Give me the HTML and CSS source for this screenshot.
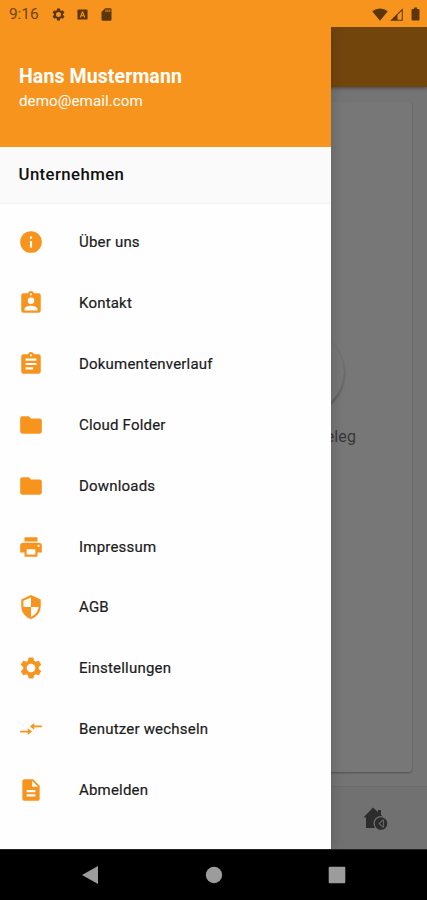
FILE: index.html
```html
<!DOCTYPE html>
<html lang="de">
<head>
<meta charset="utf-8">
<meta name="viewport" content="width=device-width, initial-scale=1">
<title>Unternehmen</title>
<link rel="stylesheet" href="styles.css">
</head>
<body>
<div class="phone">
  <header class="status">
    <span class="time">9:16</span>
    <svg class="s-gear" viewBox="0 0 24 24"><path d="M19.14 12.94c.04-.3.06-.61.06-.94s-.02-.64-.07-.94l2.03-1.58a.49.49 0 0 0 .12-.61l-1.92-3.32a.49.49 0 0 0-.59-.22l-2.39.96a7 7 0 0 0-1.62-.94l-.36-2.54a.48.48 0 0 0-.48-.41h-3.84a.48.48 0 0 0-.47.41l-.36 2.54a7.400 7.400 0 0 0-1.620.94l-2.390-.96a.48.48 0 0 0-.59.22L2.740 8.870a.48.48 0 0 0 .12.61l2.030 1.580a6 6 0 0 0 0 1.880l-2.030 1.580a.49.49 0 0 0-.12.61l1.920 3.320c.12.22.37.29.59.22l2.390-.96c.5.38 1.030.7 1.620.94l.36 2.540c.05.24.24.41.48.41h3.840c.24 0 .44-.17.47-.41l.36-2.540a7 7 0 0 0 1.620-.94l2.390.96c.22.08.47 0 .59-.22l1.920-3.320a.48.48 0 0 0-.12-.61zM12 16a4 4 0 1 1 0-8 4 4 0 0 1 0 8z"/></svg>
    <svg class="s-a" viewBox="0 0 12 12"><path fill-rule="evenodd" d="M1.500.5h9q1 0 1 1v9q0 1-1 1h-9q-1 0-1-1v-9q0-1 1-1zM5.300 2.600 3 9.300h1.300l.5-1.400h2.400l.5 1.400H9L6.700 2.600zM6 4.400l.8 2.400H5.200z"/></svg>
    <svg class="s-sd" viewBox="0 0 24 24"><path d="M18 2h-8L4 8v12a2 2 0 0 0 2 2h12a2 2 0 0 0 2-2V4a2 2 0 0 0-2-2zm-6 6h-1.500V4H12zm3 0h-1.500V4H15zm3 0h-1.500V4H18z"/></svg>
    <span class="grow"></span>
    <svg class="s-wifi" viewBox="0 0 16 13"><path d="M8 12.800.2 3.200Q3.600.4 8 .4t7.800 2.800z"/></svg>
    <svg class="s-cell" viewBox="0 0 13 13"><path fill-rule="evenodd" d="M.2 12.800 12.800.2v12.600zM7.500 11.800h4.300V2.700L7.500 7z"/></svg>
    <svg class="s-bat" viewBox="0 0 9 14"><path d="M3 .5h3V2h1.500q1 0 1 1v9.500q0 1-1 1h-6q-1 0-1-1V3q0-1 1-1H3z"/></svg>
  </header>

  <div class="stage">
    <main class="page">
      <div class="appbar"></div>
      <div class="content">
        <section class="card">
          <div class="action"><span class="disc"></span><span class="label">Beleg</span></div>
        </section>
      </div>
      <footer class="tabs">
        <svg viewBox="0 0 26 26"><path d="M.5 12.500 10 2.500l5 4.500V5h3v4.700l3.500 3.300H20v10H3V12.500z"/><circle class="ring" cx="18" cy="18.500" r="7.500"/><circle cx="18" cy="18.500" r="6.300"/><path class="euro" d="M19.800 14.800l-3.600 3.700 3.600 3.700M20.500 14.500v8"/></svg>
      </footer>
    </main>

    <aside class="drawer">
      <div class="account">
        <div class="name">Hans Mustermann</div>
        <div class="mail">demo@email.com</div>
      </div>
      <h2 class="section">Unternehmen</h2>
      <nav class="menu">
        <a><svg viewBox="0 0 24 24"><path d="M12 2a10 10 0 1 0 0 20 10 10 0 0 0 0-20zm1 15h-2v-6h2zm0-8h-2V7h2z"/></svg><span>Über uns</span></a>
        <a><svg viewBox="0 0 24 24"><path d="M19 3h-4.180a3 3 0 0 0-5.640 0H5a2 2 0 0 0-2 2v14a2 2 0 0 0 2 2h14a2 2 0 0 0 2-2V5a2 2 0 0 0-2-2zm-7 0a1 1 0 1 1 0 2 1 1 0 0 1 0-2zm0 4a3 3 0 1 1 0 6 3 3 0 0 1 0-6zm6 12H6v-1.400c0-2 4-3.100 6-3.100s6 1.100 6 3.100z"/></svg><span>Kontakt</span></a>
        <a><svg viewBox="0 0 24 24"><path d="M19 3h-4.180a3 3 0 0 0-5.640 0H5a2 2 0 0 0-2 2v14a2 2 0 0 0 2 2h14a2 2 0 0 0 2-2V5a2 2 0 0 0-2-2zm-7 0a1 1 0 1 1 0 2 1 1 0 0 1 0-2zm2 14H7v-2h7zm3-4H7v-2h10zm0-4H7V7h10z"/></svg><span>Dokumentenverlauf</span></a>
        <a><svg viewBox="0 0 24 24"><path d="M10 4H4a2 2 0 0 0-1.990 2L2 18a2 2 0 0 0 2 2h16a2 2 0 0 0 2-2V8a2 2 0 0 0-2-2h-8z"/></svg><span>Cloud Folder</span></a>
        <a><svg viewBox="0 0 24 24"><path d="M10 4H4a2 2 0 0 0-1.990 2L2 18a2 2 0 0 0 2 2h16a2 2 0 0 0 2-2V8a2 2 0 0 0-2-2h-8z"/></svg><span>Downloads</span></a>
        <a><svg viewBox="0 0 24 24"><path d="M19 8H5a3 3 0 0 0-3 3v6h4v4h12v-4h4v-6a3 3 0 0 0-3-3zm-3 11H8v-5h8zm3-7a1 1 0 1 1 0-2 1 1 0 0 1 0 2zM18 3H6v4h12z"/></svg><span>Impressum</span></a>
        <a><svg viewBox="0 0 24 24"><path d="M12 1 3 5v6c0 5.550 3.840 10.740 9 12 5.160-1.260 9-6.450 9-12V5zm0 10.990h7c-.53 4.120-3.280 7.790-7 8.940V12H5V6.300l7-3.110z"/></svg><span>AGB</span></a>
        <a><svg viewBox="-.5 -.5 25 25"><path d="M19.430 12.980c.04-.32.07-.64.07-.98s-.03-.66-.07-.98l2.110-1.650c.19-.15.24-.42.12-.64l-2-3.460a.5.5 0 0 0-.61-.22l-2.490 1c-.52-.4-1.080-.73-1.690-.98l-.38-2.650A.49.49 0 0 0 14 2h-4a.49.49 0 0 0-.49.42l-.38 2.650c-.61.25-1.170.59-1.690.98l-2.490-1a.49.49 0 0 0-.61.22l-2 3.460a.5.5 0 0 0 .12.64l2.110 1.650a8 8 0 0 0 0 1.960l-2.110 1.650a.5.5 0 0 0-.12.64l2 3.460c.12.22.39.3.61.22l2.490-1c.52.4 1.080.73 1.690.98l.38 2.650c.03.24.24.42.49.42h4c.25 0 .46-.18.49-.42l.38-2.650c.61-.25 1.170-.59 1.690-.98l2.490 1c.23.09.49 0 .61-.22l2-3.460a.5.5 0 0 0-.12-.64zM12 16.200a4.200 4.200 0 1 1 0-8.400 4.200 4.200 0 0 1 0 8.400z"/></svg><span>Einstellungen</span></a>
        <a><svg viewBox="0 0 24 24"><path d="M9.010 14H2v2h7.010v3L13 15l-3.990-4zM14.990 13v-3H22V8h-7.010V5L11 9z" transform="matrix(1 0 0 .8 0 2.400)"/></svg><span>Benutzer wechseln</span></a>
        <a><svg viewBox="0 0 24 24"><path d="M14 2H6a2 2 0 0 0-1.990 2L4 20a2 2 0 0 0 1.990 2H18a2 2 0 0 0 2-2V8zm2 16H8v-2h8zm0-4H8v-2h8zm-3-5V3.500L18.500 9z"/></svg><span>Abmelden</span></a>
      </nav>
    </aside>
  </div>

  <footer class="navbar">
    <svg viewBox="0 0 18 20"><path d="M17 1v18L1 10z"/></svg>
    <svg viewBox="0 0 18 20"><circle cx="9" cy="10" r="8.200"/></svg>
    <svg viewBox="0 0 18 20"><rect x=".7" y="1.700" width="16.600" height="16.600" rx="1"/></svg>
  </footer>
</div>
</body>
</html>
```
FILE: styles.css
```css
* { box-sizing: border-box; }
body { margin: 0; font-family: Roboto, sans-serif; background: #000; }
svg { display: block; flex: none; }

.phone { width: 427px; height: 900px; display: flex; flex-direction: column; overflow: hidden; }

.status { height: 27px; flex: none; display: flex; align-items: center; padding: 1px 7px 0 9px; background: #f7941d; fill: #5c3608; }
.time { font-size: 15.5px; color: #71430c; width: 42px; letter-spacing: -.1px; }
.s-gear { width: 15px; height: 15px; }
.s-a { width: 11px; height: 11px; margin-left: 11px; }
.s-sd { width: 15px; height: 15px; margin-left: 11px; }
.grow { flex: 1; }
.s-wifi { width: 16px; height: 13px; }
.s-cell { width: 13px; height: 13px; margin-left: 2px; }
.s-bat { width: 9px; height: 14px; margin-left: 8px; }

.stage { flex: 1; position: relative; min-height: 0; overflow: hidden; }

.page { height: 100%; display: flex; flex-direction: column; background: #747474; }
.appbar { height: 60px; flex: none; background: #72450d; box-shadow: 0 1px 4px rgba(0,0,0,.4); }
.content { flex: 1; padding: 15px 15px 14px; display: flex; }
.card { flex: 1; display: flex; justify-content: flex-end; align-items: flex-start; background: #777; border-radius: 4px; box-shadow: 0 1px 2px rgba(0,0,0,.3); }
.action { width: 82px; margin: 229px 49px 0 0; display: flex; flex-direction: column; align-items: center; }
.disc { width: 82px; height: 82px; border-radius: 50%; background: #777; box-shadow: 0 2px 3px rgba(0,0,0,.3); margin-right: 38px; }
.label { margin-top: 14px; font-size: 16px; line-height: 20px; color: #383838; align-self: flex-end; letter-spacing: .1px; margin-right: 7px; }
.tabs { height: 63px; flex: none; display: flex; align-items: center; justify-content: flex-end; padding-right: 38px; background: #717171; border-top: 1px solid #6b6b6b; fill: #2c2c2c; }
.tabs svg { width: 26px; height: 26px; }
.tabs .ring { fill: #717171; }
.tabs .euro { fill: none; stroke: #656565; stroke-width: 1.200; }

.drawer { position: absolute; left: 0; top: 0; width: 331px; height: 100%; background: #fefefe; box-shadow: 2px 0 12px rgba(0,0,0,.15); display: flex; flex-direction: column; }
.account { height: 120px; flex: none; padding: 38px 19px 0; background: #f7941d; color: #fff; }
.name { font-size: 19.500px; line-height: 24px; font-weight: 700; letter-spacing: .1px; }
.mail { font-size: 15.200px; line-height: 20px; margin-top: 2px; letter-spacing: .05px; }
.section { margin: 0; height: 57px; flex: none; padding: 0 18.500px 2px; display: flex; align-items: center; font-size: 16.800px; font-weight: 500; letter-spacing: .4px; color: #111; background: #fafafa; border-bottom: 1px solid #f4f4f4; }
.menu { padding-top: 8px; display: flex; flex-direction: column; }
.menu a { height: 60.830px; display: flex; align-items: center; gap: 35px; padding-left: 18px; font-size: 15px; font-weight: 400; letter-spacing: .2px; color: #1c1c1c; -webkit-text-stroke: .2px #1c1c1c; }
.menu svg { width: 26px; height: 26px; fill: #f7941d; }

.navbar { height: 51px; flex: none; display: flex; align-items: center; justify-content: space-between; padding: 0 81px; background: #000; fill: #9c9c9c; border-top: 1px solid #222; }
.navbar svg { width: 18px; height: 20px; }
```
